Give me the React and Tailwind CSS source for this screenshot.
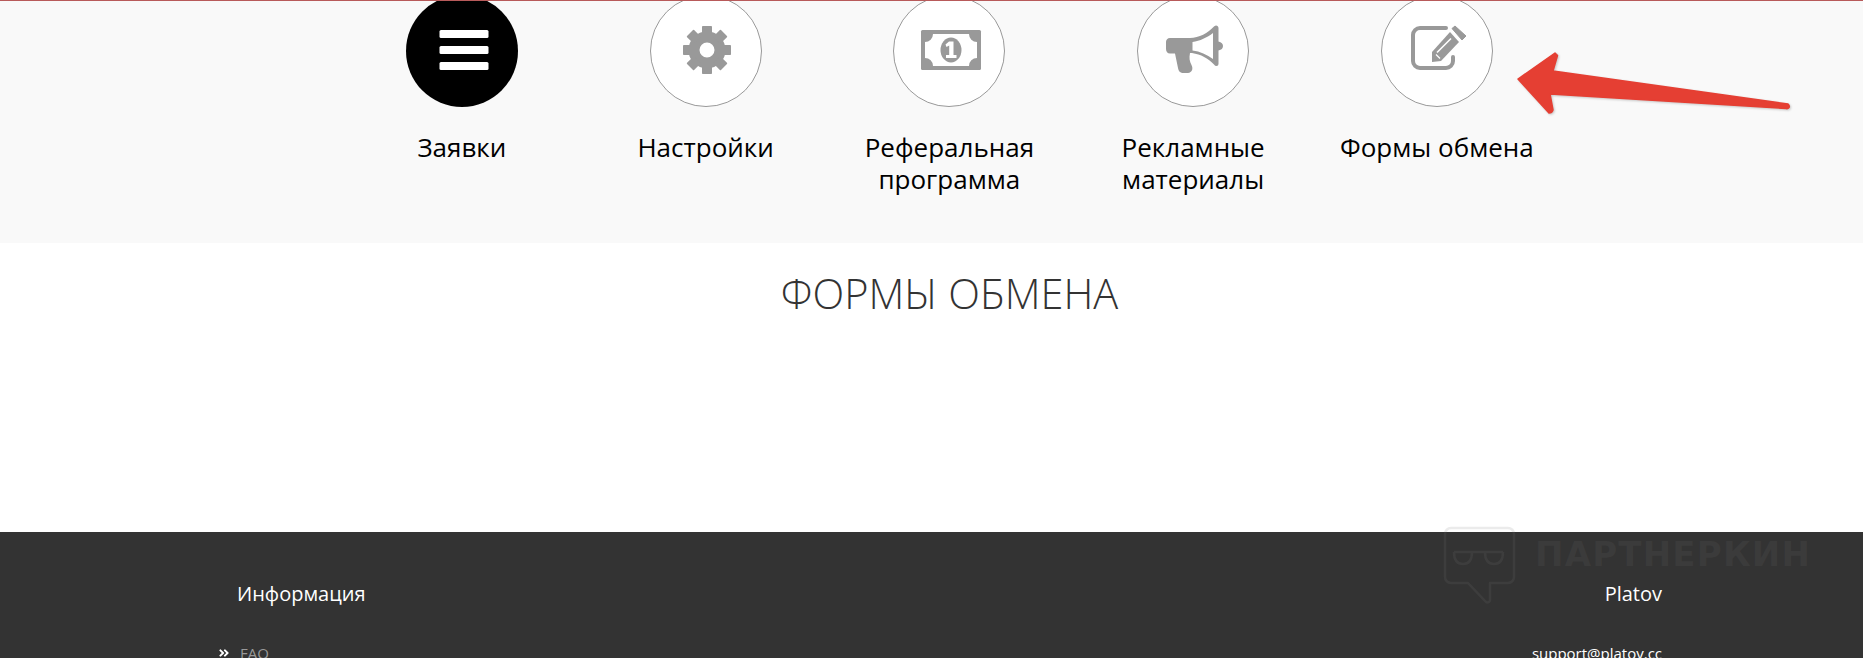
import React from "react";
import { FaAngleDoubleRight } from "react-icons/fa";

const FONT = "font-['Open_Sans','Noto_Sans',sans-serif]";

function BarsIcon() {
  return (
    <svg width="60" height="44" viewBox="-7.5 -1 60 44" fill="#fff">
      <rect x="0" y="0" width="49" height="8" rx="1.5" />
      <rect x="0" y="16" width="49" height="8" rx="1.5" />
      <rect x="0" y="32" width="49" height="8" rx="1.5" />
    </svg>
  );
}

function GearIcon() {
  const angles = [0, 45, 90, 135, 180, 225, 270, 315];
  return (
    <svg width="50" height="50" viewBox="-2 0 50 50" fill="#999999">
      <circle cx="24" cy="24" r="13" fill="none" stroke="#999999" strokeWidth="11" />
      {angles.map((a) => (
        <rect key={a} x="19" y="0" width="10" height="10" rx="0.8" transform={`rotate(${a} 24 24)`} />
      ))}
    </svg>
  );
}

function MoneyIcon() {
  return (
    <svg width="60" height="42" viewBox="-2 0 60 42" className="overflow-visible">
      <rect x="0" y="0" width="60" height="40" rx="1.5" fill="#999999" />
      <path
        d="M12 4 H48 A8 8 0 0 0 56 12 V28 A8 8 0 0 0 48 36 H12 A8 8 0 0 0 4 28 V12 A8 8 0 0 0 12 4 Z"
        fill="#ffffff"
      />
      <ellipse cx="30" cy="20" rx="10.5" ry="12.5" fill="#999999" />
      <path d="M28 11.5 H32.5 V25 H35.5 V28 H25 V25 H28.2 V15.5 L25.5 17 L24.5 14.5 Z" fill="#ffffff" />
    </svg>
  );
}

function HornIcon() {
  return (
    <svg width="80" height="70" viewBox="-2 1 80 70" fill="#999999">
      <path
        fillRule="evenodd"
        d="M15 23 H35 C44 23 53 18 59 11.5 Q61 10 62.5 11 Q63.5 12 63.5 13 V26.5 Q68 27.5 68 31 Q68 34.5 63.5 35.5 V49 Q63.5 51 61.5 51 Q60 51 59 49.5 C53 43 46 39.5 37 38 L35 38 C34 43 34.5 46 36.5 50 C38.5 54 37 57.5 33 58 H29 C25 58 23.5 56 23 53 L20 38.5 H15 C12.5 38.5 11 36.5 11 34 V27 C11 25 12.5 23 15 23 Z M37.5 27 V35.5 C45 36.5 52 39.5 58 44 V18 C52 22.5 45 26 37.5 27 Z"
      />
    </svg>
  );
}

function EditIcon() {
  return (
    <svg width="80" height="70" viewBox="-3 1 80 70">
      <path
        d="M46 13 H20 A7 7 0 0 0 13 20 V46 A7 7 0 0 0 20 53 H46 A7 7 0 0 0 53 46 V42"
        fill="none"
        stroke="#999999"
        strokeWidth="4"
        strokeLinecap="round"
      />
      <path d="M50 17 L59 27 L41 46 L32 47 L32 37 Z" fill="#999999" />
      <path d="M37 37.5 L51 23.5" stroke="#ffffff" strokeWidth="1.6" fill="none" />
      <path d="M36 39.5 L40 43.5" stroke="#ffffff" strokeWidth="1.2" fill="none" />
      <path d="M52 13.5 L55 11 L66 21 L62 25 Z" fill="#999999" stroke="#999999" strokeWidth="1" strokeLinejoin="round" />
    </svg>
  );
}

const items = [
  { icon: BarsIcon, label: ["Заявки"], active: true },
  { icon: GearIcon, label: ["Настройки"] },
  { icon: MoneyIcon, label: ["Реферальная", "программа"] },
  { icon: HornIcon, label: ["Рекламные", "материалы"] },
  { icon: EditIcon, label: ["Формы обмена"] },
];

function Item({ item }) {
  const Icon = item.icon;
  return (
    <div className="w-[243.75px] flex flex-col items-center shrink-0">
      <div
        className={
          item.active
            ? "w-[112px] h-[112px] rounded-full bg-black flex items-center justify-center"
            : "w-[112px] h-[112px] rounded-full bg-white border border-[#999999] flex items-center justify-center"
        }
      >
        <Icon />
      </div>
      <div className="mt-[24px] text-[26px] leading-[32px] text-black text-center">
        {item.label.map((l) => (
          <div key={l}>{l}</div>
        ))}
      </div>
    </div>
  );
}

export default function App() {
  return (
    <div className={`${FONT} w-full h-[658px] overflow-hidden relative bg-white`}>
      <div className="h-[243px] bg-[#f9f9f9] border-t border-[#b85a5a] overflow-hidden">
        <div className="flex pl-[340px] -mt-[6px]">
          {items.map((it) => (
            <Item key={it.label[0]} item={it} />
          ))}
        </div>
      </div>
      <div className="h-[289px] bg-white pt-[28px] pl-[36px]">
        <h1 className="text-center font-light text-[41.5px] leading-[44px] text-[#333333]">ФОРМЫ ОБМЕНА</h1>
      </div>
      <div className="h-[126px] bg-[#333333] flex justify-between text-white">
        <div className="pl-[218px] pt-[49px]">
          <div className="pl-[19px] text-[20px] leading-[25px]">Информация</div>
          <div className="mt-[37px] flex items-center text-[15px] leading-[20px] text-[#999999]">
            <FaAngleDoubleRight size={12} className="text-white mr-[10px]" />
            FAQ
          </div>
        </div>
        <div className="pr-[201px] pt-[49px] flex flex-col items-end">
          <div className="text-[20px] leading-[25px]">Platov</div>
          <div className="mt-[37px] text-[15px] leading-[20px]">support@platov.cc</div>
        </div>
      </div>

      {/* watermark */}
      <div className="absolute left-[1443px] top-[526px] flex">
        <svg width="73" height="80" viewBox="0 0 73 80" fill="none" stroke="rgba(120,120,120,0.15)" strokeWidth="2.5" strokeLinejoin="round">
          <path d="M8 2 H65 A6 6 0 0 1 71 8 V51 A6 6 0 0 1 65 57 H47 V74 A2.5 2.5 0 0 1 43 76 L25 57 H8 A6 6 0 0 1 2 51 V8 A6 6 0 0 1 8 2 Z" />
          <path d="M11 26 H60 M11 26 C11 34 14 38 20 38 C26 38 29 34 29 26 M42 26 C42 34 45 38 51 38 C57 38 60 34 60 26" />
        </svg>
        <div className="ml-[19px] mt-[6px] text-[34px] leading-[44px] font-bold tracking-[1.2px] whitespace-nowrap text-[rgba(120,120,120,0.13)] font-['DejaVu_Sans',sans-serif]">
          ПАРТНЕРКИН
        </div>
      </div>

      {/* arrow */}
      <svg className="absolute left-[1510px] top-[48px] drop-shadow-[1px_1px_1px_rgba(0,0,0,0.2)]" width="290" height="72" viewBox="0 0 290 72">
        <path
          d="M8 31 L45 5 L47.5 7.5 L43 23 L278 56 Q280 58 279 59.5 Q278 61 276 60.5 L40 46 L43 62 Q42 65 39 65 Z"
          fill="#e53f33"
          stroke="#e53f33"
          strokeWidth="1.5"
          strokeLinejoin="round"
        />
      </svg>
    </div>
  );
}
